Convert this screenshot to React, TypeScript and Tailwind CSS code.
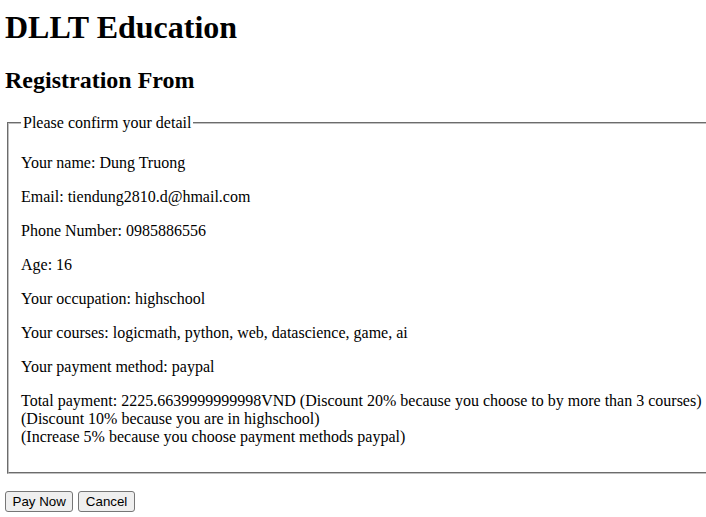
export default function App() {
  const details = [
    "Your name: Dung Truong",
    "Email: tiendung2810.d@hmail.com",
    "Phone Number: 0985886556",
    "Age: 16",
    "Your occupation: highschool",
    "Your courses: logicmath, python, web, datascience, game, ai",
    "Your payment method: paypal",
  ];

  return (
    <div className="w-[706px] h-[517px] overflow-hidden bg-white text-black pl-[5px] pt-[9px] font-['Liberation_Serif',serif] leading-[normal]">
      <h1 className="text-[32px] font-bold mb-[21.44px]">DLLT Education</h1>
      <h2 className="text-[24px] font-bold mb-[19.92px]">Registration From</h2>

      <fieldset className="w-[760px] mx-[2px] border-2 [border-style:groove] border-[#c0c0c0] px-3 pt-[5.6px] pb-[10px] text-[16px]">
        <legend className="px-[2px]">Please confirm your detail</legend>
        {details.map((line) => (
          <p key={line} className="my-4">{line}</p>
        ))}
        <p className="my-4">
          Total payment: 2225.6639999999998VND (Discount 20% because you choose to by more than 3 courses)
          <br />
          (Discount 10% because you are in highschool)
          <br />
          (Increase 5% because you choose payment methods paypal)
        </p>
      </fieldset>

      <div className="flex gap-[5px] mt-[17px]">
        <button className="bg-[#efefef] border border-[#767676] rounded-[3px] px-[6.5px] h-[21px] text-[13.33px] font-['Liberation_Sans',Arial,sans-serif] text-black">
          Pay Now
        </button>
        <button className="bg-[#efefef] border border-[#767676] rounded-[3px] px-[6.5px] h-[21px] text-[13.33px] font-['Liberation_Sans',Arial,sans-serif] text-black">
          Cancel
        </button>
      </div>
    </div>
  );
}
